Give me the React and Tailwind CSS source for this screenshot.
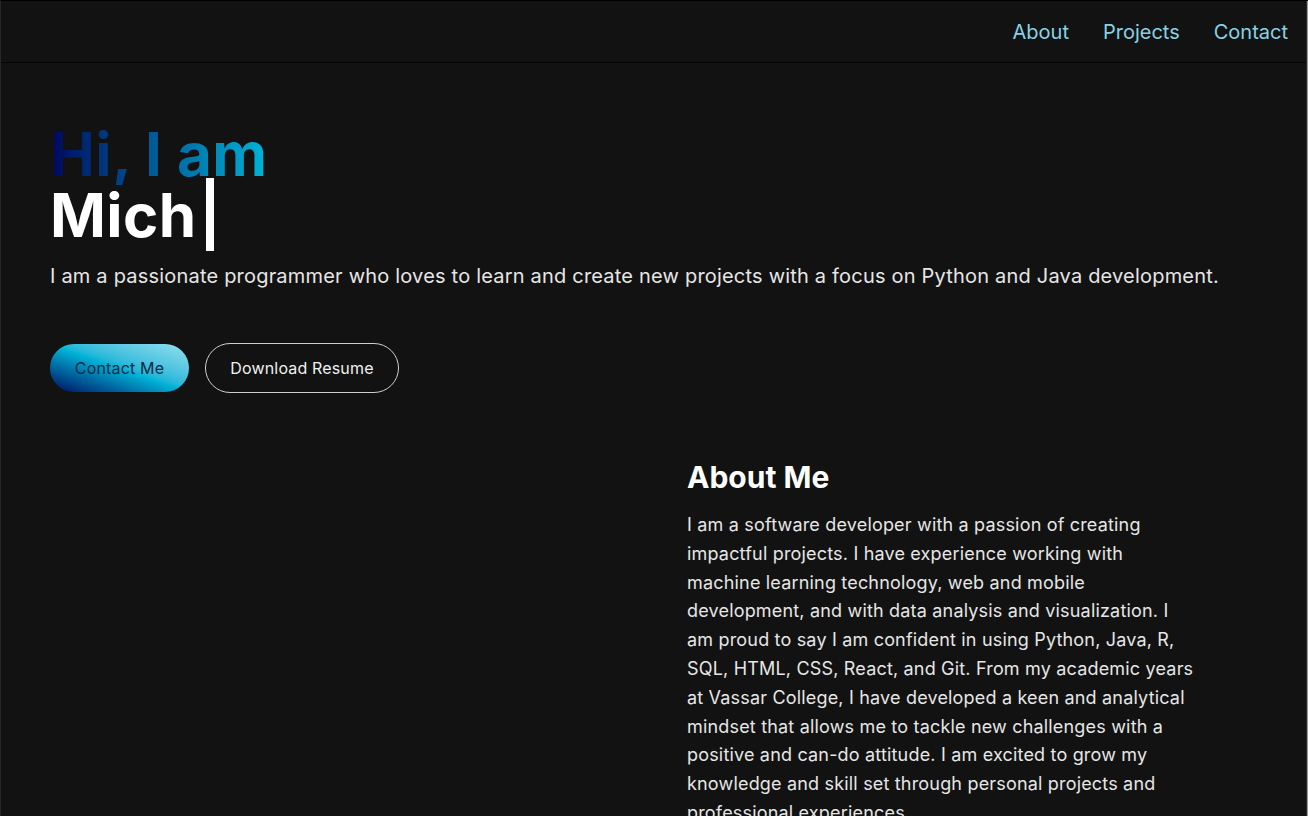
export default function App() {
  const font = { fontFamily: "Inter, 'Noto Sans', sans-serif" };
  return (
    <div style={font} className="w-[1308px] h-[816px] overflow-hidden bg-[#121212] border-t border-t-black border-l border-l-[#262626] flex">
      <div className="flex-1 flex flex-col">
        <header className="shrink-0 h-[62px] border-b border-b-[#050505] flex items-center justify-end pr-[18px] gap-[34px] text-[20px] text-[#88d3e3]">
          <a className="cursor-pointer">About</a>
          <a className="cursor-pointer">Projects</a>
          <a className="cursor-pointer">Contact</a>
        </header>
        <main className="pl-[49px] pt-[61px]">
          <h1 className="font-bold text-[60px] tracking-[0.4px]">
            <div className="h-[61px] leading-[61px]">
              <span className="inline-block bg-linear-to-r from-[#03045e] to-[#00b4d8] bg-clip-text text-transparent">Hi, I am</span>
            </div>
            <div className="h-[61px] leading-[61px] text-white whitespace-nowrap">
              Mich
              <span className="inline-block w-[8px] h-[73px] bg-white ml-[10px] -mt-[12px] align-[-14px]"></span>
            </div>
          </h1>
          <p className="mt-[16px] text-[20px] leading-[28px] tracking-[0.01em] text-[#e6e6e6]">
            I am a passionate programmer who loves to learn and create new projects with a focus on Python and Java development.
          </p>
          <div className="mt-[53px] flex items-center gap-[16px]">
            <button className="h-[48px] w-[139px] rounded-full bg-linear-to-tr from-[#03045e] via-[#00b4d8] to-[#90e0ef] text-[16px] tracking-[0.01em] text-[#072a44]">
              Contact Me
            </button>
            <button className="h-[50px] w-[194px] rounded-full border border-[#cfcfcf] text-[16px] tracking-[0.01em] text-[#f0f0f0]">
              Download Resume
            </button>
          </div>
          <section className="mt-[66px] grid grid-cols-[637px_510px]">
            <div></div>
            <div>
              <h2 className="text-[30px] leading-[36px] font-bold text-white">About Me</h2>
              <p className="mt-[16px] text-[18px] leading-[28.8px] tracking-[0.01em] text-[#e6e6e6]">
                I am a software developer with a passion of creating impactful projects. I have experience working with machine learning technology, web and mobile development, and with data analysis and visualization. I am proud to say I am confident in using Python, Java, R, SQL, HTML, CSS, React, and Git. From my academic years at Vassar College, I have developed a keen and analytical mindset that allows me to tackle new challenges with a positive and can-do attitude. I am excited to grow my knowledge and skill set through personal projects and professional experiences.
              </p>
            </div>
          </section>
        </main>
      </div>
      <div className="w-[1px] bg-[#2a2a2a]"></div>
      <div className="w-[1px] bg-[#9a9a9a]"></div>
    </div>
  );
}
